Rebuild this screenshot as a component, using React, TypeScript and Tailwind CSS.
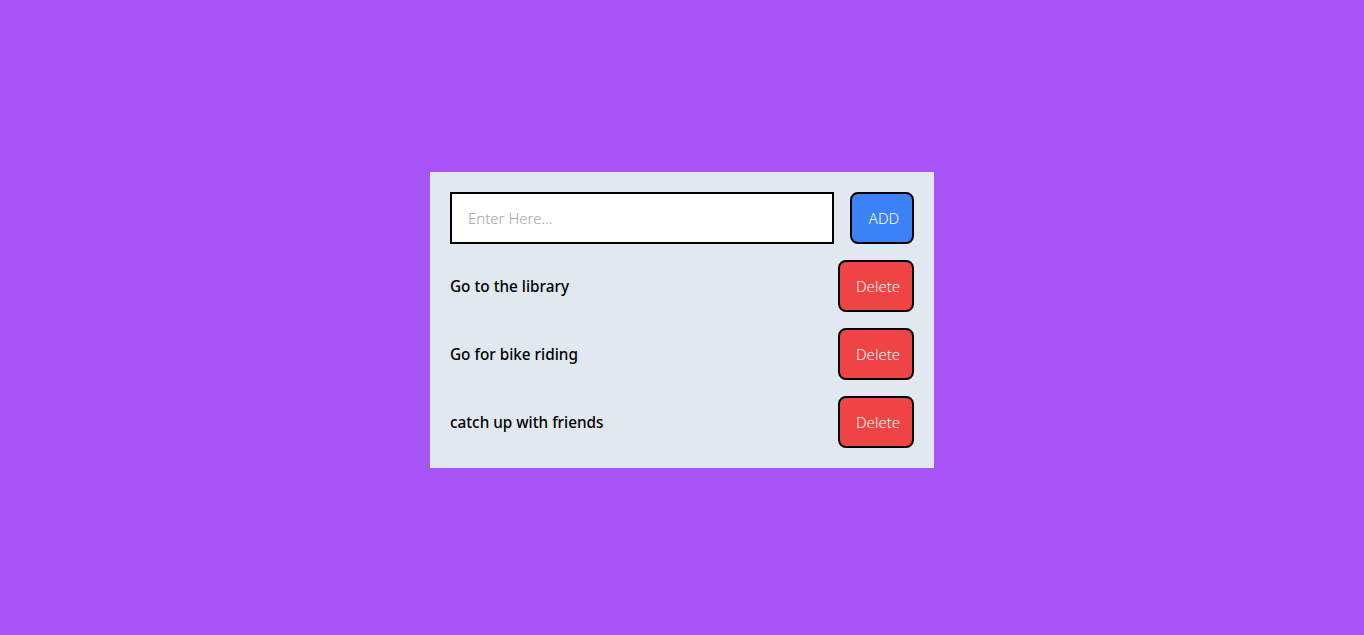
import { useState } from "react";

const App = () => {
    const [todos, setTodos] = useState<string[]>(["Go to the library", "Go for bike riding", "catch up with friends"]);
    const [text, setText] = useState("");

    const addTodo = () => {
        if (!text.trim()) return;
        setTodos([...todos, text]);
        setText("");
    };

    return (
        <div className="min-h-screen bg-[#a855f7] flex items-center justify-center pt-[5px] font-['Noto_Sans',sans-serif]">
            <div className="w-[504px] bg-[#e2e8f0] p-5 flex flex-col gap-4">
                <div className="flex items-center justify-between">
                    <input
                        type="text"
                        className="w-[384px] h-[52px] bg-white border-2 border-black px-4 text-[15px] text-black placeholder:text-[#9ca3af] placeholder:font-light outline-none"
                        placeholder="Enter Here..."
                        value={text}
                        onChange={e => setText(e.target.value)}
                    />
                    <button
                        className="w-16 h-[52px] pl-1 bg-[#3b82f6] text-white font-light text-[15px] border-2 border-black rounded-lg"
                        onClick={addTodo}
                    >
                        ADD
                    </button>
                </div>
                {todos.map((todo, i) => (
                    <div key={i} className="flex items-center justify-between">
                        <span className="text-[15.3px] font-medium text-black">{todo}</span>
                        <button
                            className="w-[76px] h-[52px] pl-1 bg-[#ef4444] text-white font-light text-[15px] border-2 border-black rounded-lg"
                            onClick={() => setTodos(todos.filter((_, j) => j !== i))}
                        >
                            Delete
                        </button>
                    </div>
                ))}
            </div>
        </div>
    );
};

export default App;
